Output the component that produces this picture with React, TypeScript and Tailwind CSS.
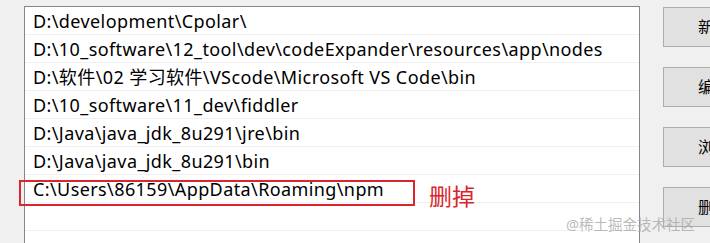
import React from 'react';

const paths = [
  'D:\\development\\Cpolar\\',
  'D:\\10_software\\12_tool\\dev\\codeExpander\\resources\\app\\nodes',
  'D:\\软件\\02 学习软件\\VScode\\Microsoft VS Code\\bin',
  'D:\\10_software\\11_dev\\fiddler',
  'D:\\Java\\java_jdk_8u291\\jre\\bin',
  'D:\\Java\\java_jdk_8u291\\bin',
  'C:\\Users\\86159\\AppData\\Roaming\\npm',
  '',
  '',
];

const buttons = ['新建', '编辑', '浏览', '删除'];

const font = { fontFamily: '"Noto Sans", "Noto Sans CJK SC", sans-serif' };

export default function App() {
  return (
    <div className="relative w-[710px] h-[243px] overflow-hidden bg-[#f0f0f0]" style={font}>
      <div className="flex gap-[23px] pl-6 pt-1.5">
        {/* path list */}
        <div className="w-[616px] h-[260px] shrink-0 border border-[#828790] bg-white">
          {paths.map((p, i) => (
            <div
              key={i}
              className="relative h-7 border-b border-[#f0f0f0] pl-2 text-[18px] tracking-[0.4px] leading-7 text-black whitespace-nowrap"
            >
              {p}
              {i === 6 && (
                <>
                  <div className="absolute left-[-6px] top-[5px] w-[396px] h-[26px] border-[2.5px] border-[#d9252b]" />
                  <span className="absolute left-[404px] top-[9px] text-[23px] tracking-normal leading-[24px] text-[#d9252b]">删掉</span>
                </>
              )}
            </div>
          ))}
        </div>
        {/* side buttons */}
        <div className="flex flex-col gap-5 pt-px">
          {buttons.map((b) => (
            <div
              key={b}
              className="w-[102px] h-10 shrink-0 border border-[#adadad] bg-[#e1e1e1] flex items-center justify-center text-[16px] text-black"
            >
              {b}
            </div>
          ))}
        </div>
      </div>
      <div className="absolute left-[566px] top-[214px] text-[14.5px] leading-5 text-[#a8a8a8]/80 whitespace-nowrap">
        @稀土掘金技术社区
      </div>
    </div>
  );
}
